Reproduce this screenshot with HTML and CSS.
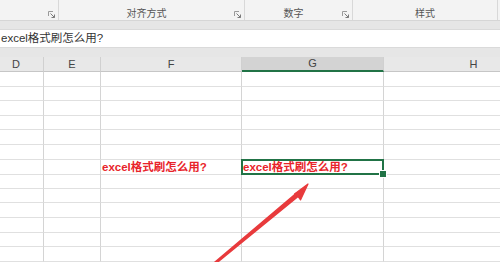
FILE: index.html
```html
<!DOCTYPE html>
<html lang="zh">
<head>
<meta charset="utf-8">
<title>excel格式刷怎么用?</title>
<link rel="stylesheet" href="styles.css">
</head>
<body>
<div class="app">
  <div class="ribbon">
    <div class="group g1"><span class="label"></span><svg class="launcher" viewBox="0 0 7 7"><path d="M0.5 5V0.5H5" fill="none" stroke="#9a9a9a" stroke-width="1"/><path d="M2.5 2.5L6.5 6.5M6.5 3.5V6.5H3.5" fill="none" stroke="#7a7a7a" stroke-width="1"/></svg></div>
    <div class="group g2"><span class="label">对齐方式</span><svg class="launcher" viewBox="0 0 7 7"><path d="M0.5 5V0.5H5" fill="none" stroke="#9a9a9a" stroke-width="1"/><path d="M2.5 2.5L6.5 6.5M6.5 3.5V6.5H3.5" fill="none" stroke="#7a7a7a" stroke-width="1"/></svg></div>
    <div class="group g3"><span class="label">数字</span><svg class="launcher" viewBox="0 0 7 7"><path d="M0.5 5V0.5H5" fill="none" stroke="#9a9a9a" stroke-width="1"/><path d="M2.5 2.5L6.5 6.5M6.5 3.5V6.5H3.5" fill="none" stroke="#7a7a7a" stroke-width="1"/></svg></div>
    <div class="group g4"><span class="label">样式</span></div>
    <div class="group g5"></div>
  </div>
  <div class="band"></div>
  <div class="formula">excel格式刷怎么用?</div>
  <div class="band band2"></div>
  <div class="sheet">
    <div class="row head"><div class="c">D</div><div class="c">E</div><div class="c">F</div><div class="c active">G</div><div class="c">H</div></div>
    <div class="row"><div class="c"></div><div class="c"></div><div class="c"></div><div class="c"></div><div class="c"></div></div>
    <div class="row"><div class="c"></div><div class="c"></div><div class="c"></div><div class="c"></div><div class="c"></div></div>
    <div class="row"><div class="c"></div><div class="c"></div><div class="c"></div><div class="c"></div><div class="c"></div></div>
    <div class="row"><div class="c"></div><div class="c"></div><div class="c"></div><div class="c"></div><div class="c"></div></div>
    <div class="row"><div class="c"></div><div class="c"></div><div class="c"></div><div class="c"></div><div class="c"></div></div>
    <div class="row"><div class="c"></div><div class="c"></div><div class="c"></div><div class="c"></div><div class="c"></div></div>
    <div class="row"><div class="c"></div><div class="c"></div><div class="c red">excel格式刷怎么用?</div><div class="c red sel">excel格式刷怎么用?</div><div class="c"></div></div>
    <div class="row"><div class="c"></div><div class="c"></div><div class="c"></div><div class="c"></div><div class="c"></div></div>
    <div class="row"><div class="c"></div><div class="c"></div><div class="c"></div><div class="c"></div><div class="c"></div></div>
    <div class="row"><div class="c"></div><div class="c"></div><div class="c"></div><div class="c"></div><div class="c"></div></div>
    <div class="row"><div class="c"></div><div class="c"></div><div class="c"></div><div class="c"></div><div class="c"></div></div>
    <div class="row"><div class="c"></div><div class="c"></div><div class="c"></div><div class="c"></div><div class="c"></div></div>
    <div class="row"><div class="c"></div><div class="c"></div><div class="c"></div><div class="c"></div><div class="c"></div></div>
  </div>
</div>
<svg class="arrow" viewBox="0 0 500 262" width="500" height="262">
  <path d="M210.5 266 L211.5 267 L298 196.5 L296 193.5 Z" fill="#e83a3c" stroke="#e83a3c" stroke-width="1.6" stroke-linejoin="round"/>
  <path d="M308 184 L300.5 200 L298 196.5 L294.5 194 Z" fill="#e83a3c" stroke="#e83a3c" stroke-width="1.2" stroke-linejoin="round"/>
</svg>
</body>
</html>
```

FILE: styles.css
```css
* { box-sizing: border-box; margin: 0; padding: 0; }
html, body { width: 500px; height: 262px; overflow: hidden; background: #fff; }
body {
  font-family: "Liberation Sans", "Noto Sans CJK SC", sans-serif;
  position: relative;
  color: #222;
}
.app { width: 500px; height: 262px; overflow: hidden; }

.ribbon {
  display: flex;
  height: 21px;
  background: #f3f3f3;
  border-bottom: 1px solid #d6d6d6;
}
.group {
  display: flex;
  align-items: center;
  height: 20px;
  padding-top: 6px;
  border-right: 1px solid #d8d8d8;
}
.g1 { width: 59px; }
.g2 { width: 186px; }
.g3 { width: 108px; }
.g4 { width: 145px; }
.g5 { flex: 1; border-right: 0; }
.label {
  flex: 1;
  text-align: center;
  font-size: 10px;
  color: #555;
  line-height: 12px;
  font-family: "Noto Sans CJK SC", sans-serif;
}
.launcher {
  width: 7px;
  height: 7px;
  margin-right: 3px;
  margin-top: 2px;
}

.band { height: 8px; background: #e6e6e6; }
.band2 { height: 9px; }

.formula {
  height: 19px;
  background: #fff;
  border-top: 1px solid #dadada;
  border-bottom: 1px solid #dadada;
  font-size: 11.5px;
  line-height: 17px;
  padding-left: 1px;
  color: #333;
  white-space: nowrap;
}

.sheet { margin-left: -11px; }
.row {
  display: grid;
  grid-template-columns: 55px 57px 141px 142px 180px;
  height: 14.6px;
}
.c {
  border-right: 1px solid #d4d4d4;
  border-bottom: 1px solid #e0e0e0;
  white-space: nowrap;
  overflow: visible;
}
.head { height: 15px; }
.head .c {
  background: #e8e8e8;
  border-bottom: 1px solid #c6c6c6;
  border-right: 1px solid #d0d0d0;
  text-align: center;
  font-size: 11px;
  line-height: 14px;
  color: #444;
}
.head .c.active {
  background: #d3d3d3;
  border-bottom: 2px solid #217346;
  line-height: 13px;
}

.red {
  color: #e8242a;
  font-weight: bold;
  font-size: 11.5px;
  line-height: 14px;
  padding-left: 1px;
}
.sel { position: relative; }
.sel::after {
  content: "";
  position: absolute;
  left: -1px;
  top: -1px;
  right: -1px;
  bottom: -1px;
  border: 2px solid #217346;
}
.sel::before {
  content: "";
  position: absolute;
  right: -4px;
  bottom: -4px;
  width: 6px;
  height: 6px;
  background: #217346;
  border: 1px solid #fff;
  z-index: 1;
}

.arrow {
  position: absolute;
  left: 0;
  top: 0;
  pointer-events: none;
}
```
